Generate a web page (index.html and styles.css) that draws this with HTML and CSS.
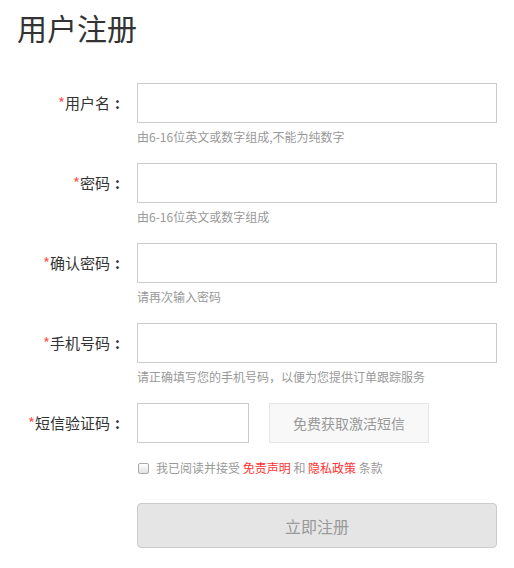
FILE: index.html
```html
<!DOCTYPE html>
<html lang="zh-CN">
<head>
<meta charset="utf-8">
<title>用户注册</title>
<link rel="stylesheet" href="styles.css">
</head>
<body>
<div class="page">
  <h1 class="title">用户注册</h1>
  <form class="form">
    <div class="row">
      <label class="label"><span class="req">*</span>用户名<span class="colon">:</span></label>
      <input class="field" type="text">
    </div>
    <div class="hint">由6-16位英文或数字组成,不能为纯数字</div>

    <div class="row">
      <label class="label"><span class="req">*</span>密码<span class="colon">:</span></label>
      <input class="field" type="password">
    </div>
    <div class="hint">由6-16位英文或数字组成</div>

    <div class="row">
      <label class="label"><span class="req">*</span>确认密码<span class="colon">:</span></label>
      <input class="field" type="password">
    </div>
    <div class="hint">请再次输入密码</div>

    <div class="row">
      <label class="label"><span class="req">*</span>手机号码<span class="colon">:</span></label>
      <input class="field" type="text">
    </div>
    <div class="hint">请正确填写您的手机号码，以便为您提供订单跟踪服务</div>

    <div class="row">
      <label class="label"><span class="req">*</span>短信验证码<span class="colon">:</span></label>
      <input class="field field-short" type="text">
      <button type="button" class="sms-btn">免费获取激活短信</button>
    </div>

    <div class="agree">
      <input class="check" type="checkbox">
      <span>我已阅读并接受 <a class="link" href="#">免责声明</a> 和 <a class="link" href="#">隐私政策</a> 条款</span>
    </div>

    <div class="submit-row">
      <button type="button" class="submit">立即注册</button>
    </div>
  </form>
</div>
</body>
</html>
```

FILE: styles.css
```css
* { box-sizing: border-box; }
body {
  margin: 0;
  background: #fff;
  font-family: "Noto Sans CJK SC", "Noto Sans", sans-serif;
  color: #333;
}
.page {
  padding: 0 0 0 17px;
}
.title {
  margin: 12px 0 0;
  font-size: 30px;
  line-height: 30px;
  font-weight: normal;
  color: #333;
  height: 71px;
}
.form {
  display: flex;
  flex-direction: column;
}
.row {
  display: flex;
  align-items: center;
  height: 40px;
}
.label {
  width: 107px;
  margin-right: 13px;
  text-align: right;
  font-size: 15px;
  line-height: 40px;
  color: #333;
  white-space: nowrap;
}
.colon {
  display: inline-block;
  width: 15px;
  margin-right: -1px;
  text-align: center;
  font-weight: bold;
}
.req {
  color: #f55;
}
.field {
  width: 360px;
  height: 40px;
  border: 1px solid #ccc;
  border-radius: 0;
  padding: 0 10px;
  font-size: 14px;
  outline: none;
  background: #fff;
}
.field-short {
  width: 112px;
}
.sms-btn {
  margin-left: 20px;
  width: 160px;
  height: 40px;
  border: 1px solid #e5e5e5;
  background: #f8f8f8;
  color: #999;
  font-family: inherit;
  font-size: 14px;
  padding: 0;
}
.hint {
  margin-left: 120px;
  height: 40px;
  padding-top: 6px;
  font-size: 12px;
  line-height: 16px;
  color: #999;
}
.agree {
  margin-left: 120px;
  padding-top: 17px;
  display: flex;
  align-items: center;
  font-size: 12px;
  line-height: 16px;
  color: #999;
}
.check {
  appearance: none;
  -webkit-appearance: none;
  width: 11px;
  height: 11px;
  margin: 0 7px 0 1px;
  border: 1px solid #aaa;
  border-radius: 2px;
  background: linear-gradient(#fff, #e2e2e2);
}
.link {
  color: #f33;
  text-decoration: none;
}
.submit-row {
  margin-left: 120px;
  margin-top: 27px;
}
.submit {
  width: 360px;
  height: 45px;
  border: 1px solid #ccc;
  border-radius: 4px;
  background: #e5e5e5;
  color: #999;
  font-family: inherit;
  font-size: 16px;
  padding: 0;
}
```
